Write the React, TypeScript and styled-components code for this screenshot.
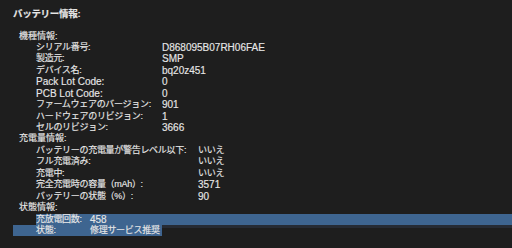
import styled, { createGlobalStyle } from "styled-components"

const GlobalStyle = createGlobalStyle`
  html, body {
    margin: 0;
    padding: 0;
    background: #1e1e1e;
  }
  body {
    font-family: "Liberation Sans", "Noto Sans CJK JP", sans-serif;
    color: #e6e6e6;
  }
`

type Row = { label: string; value: string; cjk?: boolean; valueCjk?: boolean }

const modelRows: Row[] = [
  { label: "シリアル番号:", value: "D868095B07RH06FAE", cjk: true },
  { label: "製造元:", value: "SMP", cjk: true },
  { label: "デバイス名:", value: "bq20z451", cjk: true },
  { label: "Pack Lot Code:", value: "0" },
  { label: "PCB Lot Code:", value: "0" },
  { label: "ファームウェアのバージョン:", value: "901", cjk: true },
  { label: "ハードウェアのリビジョン:", value: "1", cjk: true },
  { label: "セルのリビジョン:", value: "3666", cjk: true },
]

const chargeRows: Row[] = [
  { label: "バッテリーの充電量が警告レベル以下:", value: "いいえ", cjk: true, valueCjk: true },
  { label: "フル充電済み:", value: "いいえ", cjk: true, valueCjk: true },
  { label: "充電中:", value: "いいえ", cjk: true, valueCjk: true },
  { label: "完全充電時の容量（mAh）:", value: "3571", cjk: true },
  { label: "バッテリーの状態（%）:", value: "90", cjk: true },
]

const App: React.FC = () => (
  <Wrapper>
    <GlobalStyle />
    <Title>バッテリー情報:</Title>

    <Section>
      <SectionTitle>機種情報:</SectionTitle>
      {modelRows.map((row) => (
        <InfoRow key={row.label} $labelWidth={126}>
          <Label $cjk={row.cjk}>{row.label}</Label>
          <Value $cjk={row.valueCjk}>{row.value}</Value>
        </InfoRow>
      ))}

      <SectionTitle>充電量情報:</SectionTitle>
      {chargeRows.map((row) => (
        <InfoRow key={row.label} $labelWidth={162}>
          <Label $cjk={row.cjk}>{row.label}</Label>
          <Value $cjk={row.valueCjk}>{row.value}</Value>
        </InfoRow>
      ))}

      <SectionTitle>状態情報:</SectionTitle>
      <SelectedRow $full>
        <InfoRow $labelWidth={54}>
          <Label $cjk>充放電回数:</Label>
          <Value>458</Value>
        </InfoRow>
      </SelectedRow>
      <SelectedRow>
        <InfoRow $labelWidth={54}>
          <Label $cjk>状態:</Label>
          <Value $cjk>修理サービス推奨</Value>
        </InfoRow>
      </SelectedRow>
    </Section>
  </Wrapper>
)

const Wrapper = styled.div`
  width: 512px;
  height: 248px;
  overflow: hidden;
  padding: 8px 0 0 13px;
  box-sizing: border-box;
  -webkit-text-stroke: 0.15px #e6e6e6;
`

const Title = styled.div`
  font-size: 9.5px;
  font-weight: 700;
  line-height: 12px;
  letter-spacing: -0.3px;
  margin-bottom: 10.5px;
`

const Section = styled.div`
  display: flex;
  flex-direction: column;
  margin-left: -13px;
`

const SectionTitle = styled.div`
  padding-left: 19px;
  font-size: 9px;
  line-height: 11.45px;
  height: 11.45px;
`

const SelectedRow = styled.div<{ $full?: boolean }>`
  background: #3e6590;
  align-self: flex-start;
  width: ${({ $full }) => ($full ? "476px" : "149px")};
  margin-left: ${({ $full }) => ($full ? "36px" : "13px")};
  padding-left: ${({ $full }) => ($full ? "0" : "23px")};
  box-sizing: border-box;
  box-shadow: ${({ $full }) => ($full ? "0 3px 0 #262b34" : "none")};

  & > div {
    padding-left: 0;
  }
`

const InfoRow = styled.div<{ $labelWidth: number }>`
  display: grid;
  grid-template-columns: ${({ $labelWidth }) => $labelWidth}px auto;
  padding-left: 36px;
  height: 11.45px;
  line-height: 11.45px;
  white-space: nowrap;
`

const Label = styled.span<{ $cjk?: boolean }>`
  font-size: ${({ $cjk }) => ($cjk ? "9px" : "10px")};
  letter-spacing: ${({ $cjk }) => ($cjk ? "-0.3px" : "0")};
`

const Value = styled.span<{ $cjk?: boolean }>`
  font-size: ${({ $cjk }) => ($cjk ? "9px" : "10px")};
  letter-spacing: ${({ $cjk }) => ($cjk ? "-0.3px" : "0")};
`

export default App
